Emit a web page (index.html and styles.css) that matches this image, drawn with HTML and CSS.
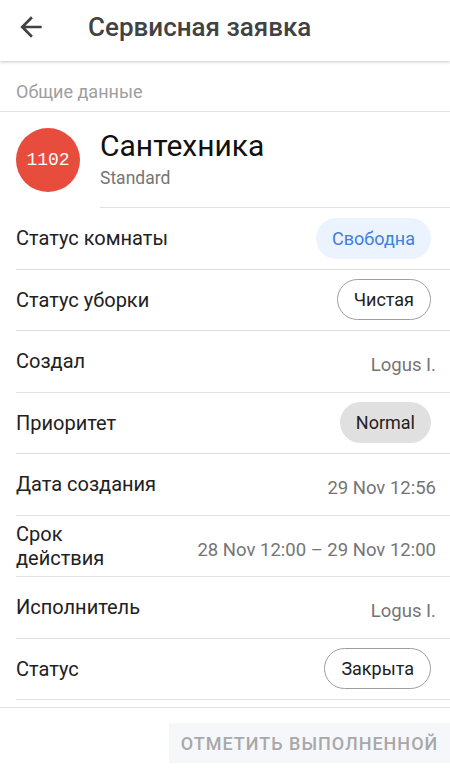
FILE: index.html
```html
<!DOCTYPE html>
<html lang="ru">
<head>
  <meta charset="UTF-8">
  <meta name="viewport" content="width=device-width, initial-scale=1.0">
  <title>Сервисная заявка</title>
  <link rel="stylesheet" href="styles.css">
</head>
<body>
  <!-- Top app bar -->
  <header class="appBar">
    <button class="backButton" aria-label="Назад">
      <svg width="32" height="32" viewBox="0 0 24 24">
        <path d="M20 11H7.83l5.59-5.59L12 4l-8 8 8 8 1.41-1.41L7.83 13H20v-2z" fill="#424242"/>
      </svg>
    </button>
    <h1 class="appTitle">Сервисная заявка</h1>
  </header>

  <main class="content">
    <div class="sectionTitle">Общие данные</div>

    <!-- Room card -->
    <div class="roomHeader">
      <div class="roomBadge">1102</div>
      <div class="roomInfo">
        <div class="roomName">Сантехника</div>
        <div class="roomType">Standard</div>
      </div>
    </div>

    <div class="rows">
      <div class="row">
        <div class="rowLabel">Статус комнаты</div>
        <span class="chip chipBlue">Свободна</span>
      </div>
      <div class="row">
        <div class="rowLabel">Статус уборки</div>
        <span class="chip chipOutline">Чистая</span>
      </div>
      <div class="row">
        <div class="rowLabel">Создал</div>
        <div class="rowValue">Logus I.</div>
      </div>
      <div class="row">
        <div class="rowLabel">Приоритет</div>
        <span class="chip chipGray">Normal</span>
      </div>
      <div class="row">
        <div class="rowLabel">Дата создания</div>
        <div class="rowValue">29 Nov 12:56</div>
      </div>
      <div class="row">
        <div class="rowLabel">Срок действия</div>
        <div class="rowValue">28 Nov 12:00 – 29 Nov 12:00</div>
      </div>
      <div class="row">
        <div class="rowLabel">Исполнитель</div>
        <div class="rowValue">Logus I.</div>
      </div>
      <div class="row">
        <div class="rowLabel">Статус</div>
        <span class="chip chipOutline">Закрыта</span>
      </div>
    </div>
  </main>

  <!-- Bottom action -->
  <footer class="bottomBar">
    <button class="doneButton" disabled>Отметить выполненной</button>
  </footer>
</body>
</html>
```

FILE: styles.css
```css
body {
  margin: 0;
  padding: 0;
  background: #ffffff;
  font-family: Roboto, "Noto Sans", sans-serif;
  color: #212121;
}

/* App bar */
.appBar {
  height: 54px;
  padding-bottom: 7px;
  display: flex;
  align-items: center;
  background: #ffffff;
  box-shadow: 0 1px 3px rgba(0, 0, 0, 0.22);
  position: relative; /* keep shadow over content */
  z-index: 2;
}

.backButton {
  width: 48px;
  height: 48px;
  margin-left: 15px;
  padding: 0;
  border: none;
  background: none;
  display: flex;
  align-items: center;
}

.appTitle {
  margin: 0 0 0 25px;
  font-size: 26px;
  font-weight: 500;
  color: #424242;
}

/* Section */
.sectionTitle {
  padding: 20px 16px 9px;
  font-size: 18px;
  line-height: 21px;
  color: #9e9e9e;
  border-bottom: 1px solid #e0e0e0;
}

.roomHeader {
  display: flex;
  align-items: flex-start;
  padding: 16px 0 0 16px;
}

.roomBadge {
  width: 64px;
  height: 64px;
  border-radius: 50%;
  background: #e74c3c;
  color: #ffffff;
  font-family: "Liberation Mono", "DejaVu Sans Mono", monospace;
  font-size: 18px;
  display: flex;
  align-items: center;
  justify-content: center;
  flex-shrink: 0;
}

.roomInfo {
  flex: 1;
  margin-left: 20px;
  height: 79px;
  border-bottom: 1px solid #e0e0e0;
}

.roomName {
  margin-top: 1px;
  font-size: 30px;
  line-height: 34px;
  color: #111111;
}

.roomType {
  margin-top: 5px;
  font-size: 17.5px;
  line-height: 21px;
  color: #757575;
}

/* Detail rows */
.rows {
  padding-left: 16px;
}

.row {
  height: 61.5px;
  box-sizing: border-box;
  display: flex;
  align-items: center;
  justify-content: space-between;
  padding-right: 14px;
  border-bottom: 1px solid #e0e0e0;
}

.rowLabel {
  flex: 1 1 0;
  min-width: 0;
  font-size: 20px;
  line-height: 24px;
  color: #212121;
}

.rowValue {
  flex: 0 0 auto;
  margin-left: 52px; /* leaves the long label room to wrap */
  margin-top: 8px;
  font-size: 18.5px;
  color: #757575;
}

.chip {
  flex-shrink: 0;
  height: 41px;
  box-sizing: border-box;
  padding: 0 16px;
  margin-right: 5px;
  border-radius: 21px;
  display: flex;
  align-items: center;
  font-size: 18px;
}

.chipBlue {
  background: #eaf3fe;
  color: #3f7fe0;
}

.chipOutline {
  border: 1px solid #9e9e9e;
  color: #212121;
}

.chipGray {
  background: #e0e0e0;
  color: #212121;
}

/* Bottom bar */
.bottomBar {
  margin-top: 7px;
  border-top: 1px solid #e0e0e0;
  display: flex;
  justify-content: flex-end;
  padding-top: 15px;
}

.doneButton {
  width: 281px;
  height: 40px;
  border: none;
  background: #f6f7fb;
  color: #a8a8a8;
  font-family: Roboto, sans-serif;
  font-size: 18px;
  font-weight: 500;
  text-transform: uppercase;
  letter-spacing: 1px;
}
```
